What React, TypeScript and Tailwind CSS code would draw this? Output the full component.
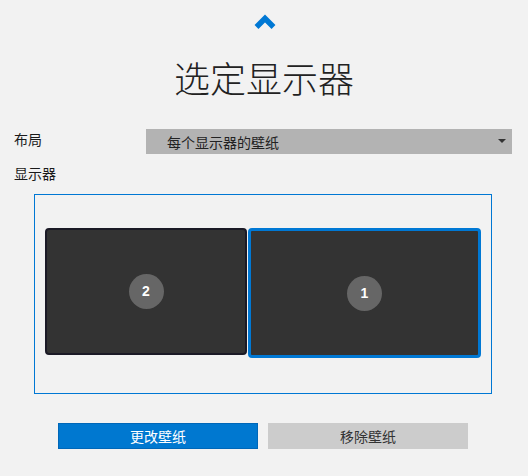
import React from "react";

export default function App() {
  return (
    <div className="w-[528px] h-[476px] bg-[#f2f2f2] flex flex-col font-['Noto_Sans_CJK_SC','Noto_Sans',sans-serif] text-[#1a1a1a] overflow-hidden">
      <div className="flex justify-center pt-[14px] pl-[1px]">
        <svg width="22" height="16" viewBox="0 0 22 16">
          <polyline points="2.5,13 11,4.5 19.5,13" fill="none" stroke="#0078d4" strokeWidth="5.5" strokeLinejoin="miter" />
        </svg>
      </div>
      <h1 className="mt-[29px] text-center text-[36px] leading-[36px] font-light text-[#222]">选定显示器</h1>
      <div className="mt-[34px] flex items-center pl-[14px] pr-[16px]">
        <div className="w-[132px] text-[14px] leading-[20px] -mt-[6px]">布局</div>
        <div className="flex-1 h-[25px] bg-[#b3b3b3] flex items-center pl-[21px] pr-[6px]">
          <span className="flex-1 text-[14px] leading-[20px] text-[#222]">每个显示器的壁纸</span>
          <svg width="8" height="5" viewBox="0 0 8 5">
            <polygon points="0,0 8,0 4,4" fill="#333" />
          </svg>
        </div>
      </div>
      <div className="mt-[9px] pl-[14px] text-[14px] leading-[20px]">显示器</div>
      <div className="mt-[11px] ml-[34px] w-[458px] h-[200px] border border-[#0078d4] pt-[33px] pl-[10px] flex items-start">
        <div className="w-[202px] h-[127px] bg-[#333333] border-2 border-[#1b1a26] rounded-[4px] flex items-center justify-center">
          <div className="w-[35px] h-[35px] rounded-full bg-[#666666] flex items-center justify-center text-white text-[14px] font-bold font-['Liberation_Sans',sans-serif]">2</div>
        </div>
        <div className="ml-[1px] w-[233px] h-[130px] bg-[#333333] border-[3px] border-[#0078d4] rounded-[4px] flex items-center justify-center">
          <div className="w-[35px] h-[35px] rounded-full bg-[#666666] flex items-center justify-center text-white text-[14px] font-bold font-['Liberation_Sans',sans-serif]">1</div>
        </div>
      </div>
      <div className="mt-[29px] pl-[58px] flex gap-[10px]">
        <button className="w-[200px] h-[26px] bg-[#0078d0] border border-[#0067b8] text-white text-[14px] leading-[20px] flex items-center justify-center">更改壁纸</button>
        <button className="w-[200px] h-[26px] bg-[#cccccc] text-[#333] text-[14px] leading-[20px] flex items-center justify-center">移除壁纸</button>
      </div>
    </div>
  );
}
